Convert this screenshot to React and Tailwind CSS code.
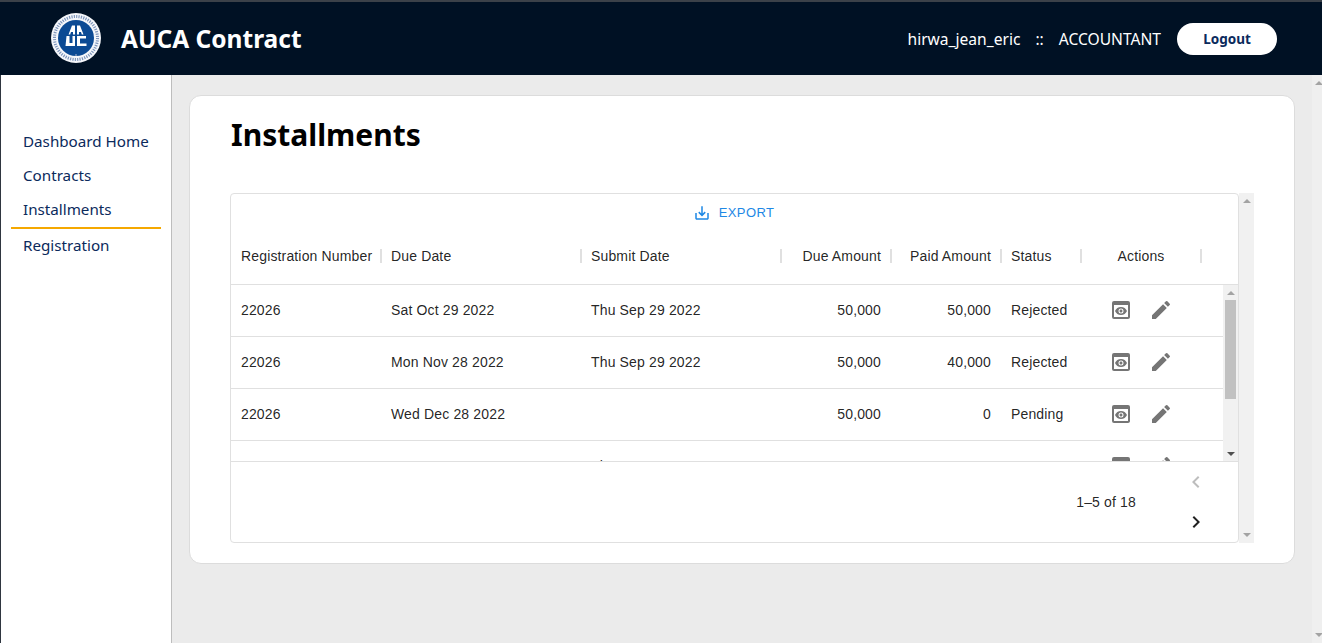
import { MdPreview, MdEdit, MdSaveAlt, MdChevronLeft, MdChevronRight } from 'react-icons/md';

const rows = [
  { reg: '22026', due: 'Sat Oct 29 2022', submit: 'Thu Sep 29 2022', dueAmount: '50,000', paid: '50,000', status: 'Rejected' },
  { reg: '22026', due: 'Mon Nov 28 2022', submit: 'Thu Sep 29 2022', dueAmount: '50,000', paid: '40,000', status: 'Rejected' },
  { reg: '22026', due: 'Wed Dec 28 2022', submit: '', dueAmount: '50,000', paid: '0', status: 'Pending' },
  { reg: '22026', due: 'Sat Jan 28 2023', submit: 'Thu Sep 29 2022', dueAmount: '50,000', paid: '50,000', status: '' },
];

function Logo() {
  return (
    <svg width="50" height="50" viewBox="0 0 50 50" className="shrink-0 -mt-[1px]">
      <circle cx="25" cy="25" r="25" fill="#f4f6fa" />
      <circle cx="25" cy="25" r="21.5" fill="none" stroke="#7d95bb" strokeWidth="3" strokeDasharray="1.2 1.2" />
      <circle cx="25" cy="25" r="18" fill="#0b4a94" />
      <path d="M17.500 21.500 21 12.500h3v9h-2v-2.500h-2l-.8 2.500zM32.500 21.500 29 12.500h-3v9h2v-2.500h2l.8 2.500z" fill="#fff" />
      <path d="M15.500 23h3v7h3v-7H24v10h-9.500zM26 23h9v2.500h-6v5h6.500V33H26z" fill="#fff" />
      <circle cx="25" cy="42" r="1" fill="#7d95bb" />
    </svg>
  );
}

function Arrow({ up, className }) {
  return up ? (
    <span className={`w-0 h-0 border-x-[4px] border-x-transparent border-b-[4px] ${className}`} />
  ) : (
    <span className={`w-0 h-0 border-x-[4px] border-x-transparent border-t-[4px] ${className}`} />
  );
}

function HeaderCell({ width, align = 'text-left', children }) {
  return (
    <div className={`relative h-full flex items-center px-[10px] whitespace-nowrap ${width}`}>
      <span className={`w-full ${align}`}>{children}</span>
      <span className="absolute -right-[1px] top-[17px] h-[14px] w-[2px] bg-[#e0e0e0]" />
    </div>
  );
}

function Row({ row }) {
  return (
    <div className="flex items-center h-[52px] shrink-0 border-b border-[#e0e0e0]">
      <div className="w-[150px] px-[10px]">{row.reg}</div>
      <div className="w-[200px] px-[10px]">{row.due}</div>
      <div className="w-[200px] px-[10px]">{row.submit}</div>
      <div className="w-[110px] px-[10px] text-right">{row.dueAmount}</div>
      <div className="w-[110px] px-[10px] text-right">{row.paid}</div>
      <div className="w-[80px] px-[10px]">{row.status}</div>
      <div className="w-[120px] flex justify-center mb-[2px] text-[#757575]">
        <span className="w-[40px] flex justify-center"><MdPreview size={24} /></span>
        <span className="w-[40px] flex justify-center"><MdEdit size={24} /></span>
      </div>
    </div>
  );
}

export default function App() {
  return (
    <div className="w-[1322px] h-[643px] overflow-hidden flex flex-col bg-[#ebebeb] font-['Noto_Sans',sans-serif]">
      <div className="h-[2px] bg-[#3b4149] shrink-0" />
      <header className="h-[73px] shrink-0 bg-[#001124] flex items-center justify-between pl-[51px] pr-[45px] text-white">
        <div className="flex items-center gap-[20px]">
          <Logo />
          <h1 className="pt-[2px] text-[24.500px] font-bold">AUCA Contract</h1>
        </div>
        <div className="flex items-center text-[15.600px]">
          <span className="pt-[2px]">hirwa_jean_eric</span>
          <span className="pt-[2px] mx-[15px]">::</span>
          <span className="pt-[2px]">ACCOUNTANT</span>
          <button className="ml-[16px] w-[100px] h-[32px] pt-[1px] rounded-full bg-white text-[#0b2a5c] text-[13.500px] font-bold">Logout</button>
        </div>
      </header>

      <div className="flex flex-1 min-h-0">
        <aside className="w-[172px] shrink-0 bg-white border-l border-l-[#2f3640] border-r border-r-[#bdbdbd] pt-[50px] text-[15.200px] text-[#0b2a5c]">
          <div className="h-[34px] pb-[2px] flex items-center pl-[22px]">Dashboard Home</div>
          <div className="h-[34px] pb-[2px] flex items-center pl-[22px]">Contracts</div>
          <div className="h-[34px] pb-[2px] flex items-center pl-[22px]">Installments</div>
          <div className="h-[2px] ml-[10px] w-[150px] bg-[#f5a800]" />
          <div className="h-[34px] pb-[2px] flex items-center pl-[22px]">Registration</div>
        </aside>

        <main className="flex-1 min-w-0 pl-[17px] pt-[20px]">
          <div className="w-[1106px] h-[469px] bg-white border border-[#dcdcdc] rounded-[12px] pl-[40px] pt-[20px]">
            <h2 className="pl-[1px] text-[30px] leading-[38px] font-bold text-black">Installments</h2>

            <div className="mt-[39px] flex h-[350px] font-['Liberation_Sans',sans-serif] text-[14px] tracking-[0.15px] text-[#000000de]">
              <div className="w-[1009px] h-full border border-[#e0e0e0] rounded-[4px] flex flex-col">
                <div className="h-[38px] shrink-0 flex items-center justify-center gap-[8px] text-[13px] tracking-[0.4px] text-[#1e88e5] pr-[2px]">
                  <MdSaveAlt size={18} />
                  <span>EXPORT</span>
                </div>
                <div className="h-[53px] shrink-0 flex pb-[4px] border-b border-[#e0e0e0] items-stretch">
                  <HeaderCell width="w-[150px]">Registration Number</HeaderCell>
                  <HeaderCell width="w-[200px]">Due Date</HeaderCell>
                  <HeaderCell width="w-[200px]">Submit Date</HeaderCell>
                  <HeaderCell width="w-[110px]" align="text-right">Due Amount</HeaderCell>
                  <HeaderCell width="w-[110px]" align="text-right">Paid Amount</HeaderCell>
                  <HeaderCell width="w-[80px]">Status</HeaderCell>
                  <HeaderCell width="w-[120px]" align="text-center">Actions</HeaderCell>
                </div>

                <div className="h-[176px] shrink-0 flex overflow-hidden">
                  <div className="flex-1 min-w-0 flex flex-col">
                    {rows.map((row, i) => (
                      <Row key={i} row={row} />
                    ))}
                  </div>
                  <div className="w-[15px] shrink-0 bg-[#f1f1f1] flex flex-col items-center">
                    <span className="h-[15px] flex items-center"><Arrow up className="border-b-[#a3a3a3]" /></span>
                    <div className="w-[11px] h-[99px] bg-[#c1c1c1]" />
                    <span className="mt-auto h-[15px] flex items-center"><Arrow className="border-t-[#505050]" /></span>
                  </div>
                </div>

                <div className="flex-1 min-h-0 border-t border-[#e0e0e0] flex items-center justify-end pr-[22px]">
                  <span>1–5 of 18</span>
                  <div className="ml-[40px] w-[40px] pb-[1px] flex flex-col items-center">
                    <span className="h-[40px] flex items-center text-[#00000042]"><MdChevronLeft size={24} /></span>
                    <span className="h-[40px] flex items-center text-[#000000de]"><MdChevronRight size={24} /></span>
                  </div>
                </div>
              </div>
              <div className="w-[15px] h-full bg-[#f1f1f1] flex flex-col items-center justify-between py-[6px]">
                <Arrow up className="border-b-[#a3a3a3]" />
                <Arrow className="border-t-[#a3a3a3]" />
              </div>
            </div>
          </div>
        </main>

        <div className="w-[10px] shrink-0 bg-[#efefef] flex flex-col justify-between py-[6px] pl-[3px]">
          <Arrow up className="border-b-[#a3a3a3]" />
          <Arrow className="border-t-[#a3a3a3]" />
        </div>
      </div>
    </div>
  );
}
